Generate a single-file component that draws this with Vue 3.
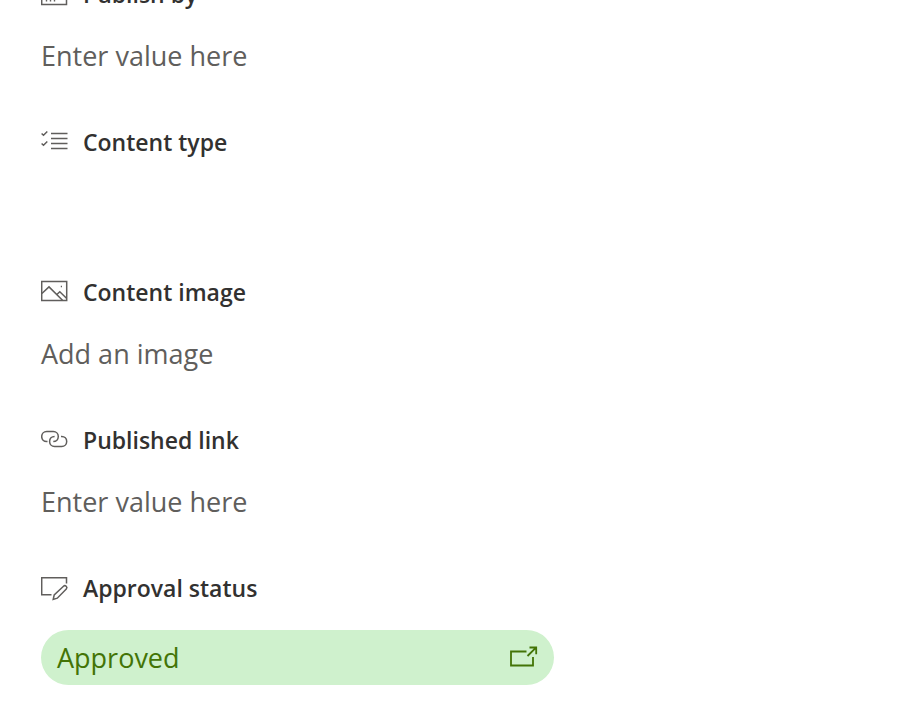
<template>
  <form class="item-form" @submit.prevent>
    <div v-for="field in fields" :key="field.id" class="field">
      <label class="field-label" :for="field.id">
        <svg class="icon" viewBox="0 -2 28 28" aria-hidden="true">
          <path v-for="d in icons[field.icon]" :key="d" :d="d" />
        </svg>
        <span>{{ field.label }}</span>
      </label>

      <input
        v-if="field.kind === 'text'"
        :id="field.id"
        v-model="values[field.id]"
        class="control"
        type="text"
        placeholder="Enter value here"
      />
      <select
        v-else-if="field.kind === 'choice'"
        :id="field.id"
        v-model="values[field.id]"
        class="control choice"
      >
        <option value=""></option>
      </select>
      <button v-else-if="field.kind === 'image'" :id="field.id" class="control" type="button">
        Add an image
      </button>
      <button v-else :id="field.id" class="status" type="button">
        <span>Approved</span>
        <svg class="icon status-icon" viewBox="0 0 28 28" aria-hidden="true">
          <path v-for="d in icons.open" :key="d" :d="d" />
        </svg>
      </button>
    </div>
  </form>
</template>

<script setup>
import { reactive } from 'vue'

const fields = [
  { id: 'publish-by', label: 'Publish by', icon: 'calendar', kind: 'text' },
  { id: 'content-type', label: 'Content type', icon: 'choice', kind: 'choice' },
  { id: 'content-image', label: 'Content image', icon: 'image', kind: 'image' },
  { id: 'published-link', label: 'Published link', icon: 'link', kind: 'text' },
  { id: 'approval-status', label: 'Approval status', icon: 'edit', kind: 'status' }
]

const values = reactive({
  'publish-by': '',
  'content-type': '',
  'published-link': ''
})

const icons = {
  calendar: [
    'M.7 2.5H25.5V22.5H.7Z M.7 8H25.5 M6 0V5 M20 0V5',
    'M8.8 13.5H10.2 M12.8 13.5H14.2 M16.8 13.5H18.2 M20.8 13.5H22.2',
    'M4.8 18.8H6.2 M8.8 18.8H10.2 M12.8 18.8H14.2'
  ],
  choice: [
    'M10 3.5H26.5 M10 8.5H26.5 M10 13.5H26.5 M10 18.5H26.5',
    'M.6 3.5L2.5 5.3L6.3 1.5 M.6 13.5L2.5 15.3L6.3 11.5'
  ],
  image: [
    'M.7 1.5H25.7V20.5H.7Z',
    'M.9 13.5L8 6.9L21.5 20.3 M15.6 14.7L18.8 11.7L25.5 18.2',
    'M19.8 6.4H21'
  ],
  link: [
    'M6.5 13.6H5.7C2.8 13.6 .7 11.5 .7 8.6S2.8 3.6 5.7 3.6H12.3C15.2 3.6 17.3 5.7 17.3 8.6S15.2 13.6 12.3 13.6',
    'M13.6 8.4C10.7 8.4 8.6 10.5 8.6 13.4S10.7 18.4 13.6 18.4H20.7C23.6 18.4 25.7 16.3 25.7 13.4S23.6 8.4 20.7 8.4H20'
  ],
  edit: [
    'M10.5 18.7H.7V1.7H25.5V7.5',
    'M12.2 23.4L13.2 19L22.5 10.2C24.3 8.6 27 11.2 25.3 13L16.3 22.2Z'
  ],
  open: [
    'M16.5 7.5H1V21.5H23V13',
    'M17.5 12L26 3.6 M19.5 3.5H26.2V10.2'
  ]
}
</script>

<style>
body {
  margin: 0;
  background: #fff;
}
</style>

<style scoped>
.item-form {
  display: flex;
  flex-direction: column;
  gap: 46px;
  /* first field is scrolled partly out of view */
  margin-top: -24px;
  padding: 0 41px 36px;
  font-family: 'Segoe UI', 'Open Sans', 'Noto Sans', sans-serif;
}

.field {
  display: flex;
  flex-direction: column;
  align-items: flex-start;
  gap: 20px;
}

.field-label {
  display: flex;
  align-items: center;
  gap: 14px;
  color: #323130;
  font-size: 23px;
  font-weight: 600;
  line-height: 36px;
}

.icon {
  flex: none;
  width: 28px;
  height: 28px;
  fill: none;
  stroke: #605e5c;
  stroke-width: 1.5;
}

.control {
  appearance: none;
  box-sizing: border-box;
  width: 100%;
  max-width: 513px;
  height: 46px;
  margin: 0;
  padding: 0;
  border: 0;
  background: transparent;
  color: #605e5c;
  font: inherit;
  font-size: 27px;
  text-align: left;
}

.control::placeholder {
  color: #605e5c;
  opacity: 1;
}

.choice {
  height: 48px;
}

.status {
  display: flex;
  align-items: center;
  justify-content: space-between;
  width: 100%;
  max-width: 513px;
  height: 55px;
  margin: 4px 0 0;
  padding: 0 16px;
  border: 0;
  border-radius: 28px;
  background: #cff1cd;
  color: #437406;
  font: inherit;
  font-size: 27px;
}

.status-icon {
  stroke: #437406;
  stroke-width: 1.8;
}
</style>
